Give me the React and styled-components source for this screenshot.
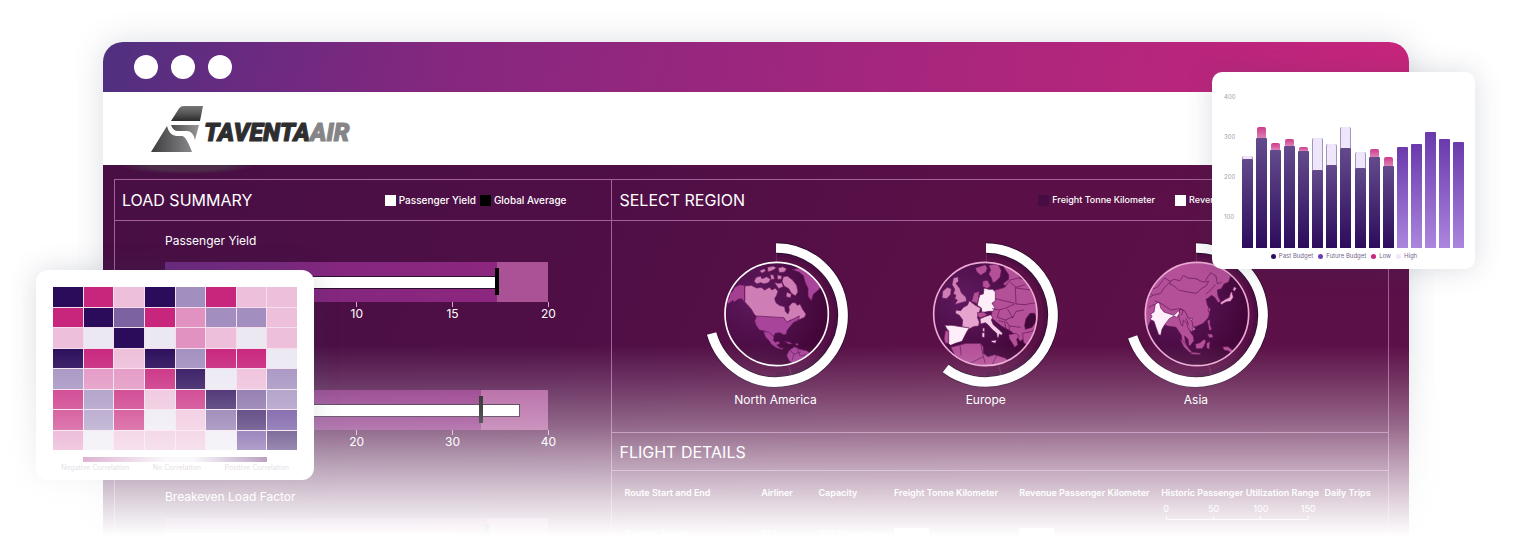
import React from 'react'
import styled, { createGlobalStyle } from 'styled-components'

const GlobalStyle = createGlobalStyle`
  * {
    box-sizing: border-box;
  }

  body {
    margin: 0;
    background: #ffffff;
    font-family: Inter, "Open Sans", sans-serif;
  }
`

const line = '#a3609a'

const Page = styled.main`
  position: relative;
  height: 100vh;
  min-height: 540px;
  padding: 42px 105px 0 103px;
  overflow: hidden;
`

const BrowserWindow = styled.section`
  border-radius: 20px 20px 0 0;
  overflow: hidden;
  box-shadow: 0 0 32px rgba(60, 70, 100, 0.18);
`

const TitleBar = styled.div`
  display: flex;
  align-items: center;
  gap: 13px;
  height: 50px;
  padding-left: 31px;
  background: linear-gradient(100deg, #4f3080 0%, #6b2a80 12%, #85277f 26%, #a5267d 60%, #c8257c 100%);
`

const Dot = styled.span`
  width: 24px;
  height: 24px;
  border-radius: 50%;
  background: #ffffff;
`

const BrandBar = styled.header`
  display: flex;
  align-items: center;
  height: 73px;
  padding-left: 47px;
  background: #ffffff;
`

const Body = styled.div`
  height: 480px;
  padding: 14px 20px 0 11px;
  background:
    radial-gradient(66px 8px at 84px 1px, #4c2c48 60%, transparent 100%),
    linear-gradient(115deg, #470f44 0%, #4f0f46 35%, #5a1046 60%, #5c1148 100%);
`

const Dashboard = styled.div`
  display: grid;
  grid-template-columns: 39fr 61fr;
  height: 100%;
  border: 1px solid ${line};
`

const Column = styled.div`
  & + & {
    border-left: 1px solid ${line};
  }
`

const PanelHeader = styled.div`
  display: flex;
  align-items: center;
  justify-content: space-between;
  height: ${props => props.$height || 41}px;
  padding: 0 ${props => props.$right || 45}px 0 7px;
  border-bottom: 1px solid ${line};
`

const PanelTitle = styled.h2`
  margin: 0;
  font-size: 16px;
  font-weight: 400;
  line-height: 24px;
  color: #ffffff;
`

const Legend = styled.div`
  display: flex;
  gap: ${props => props.$gap}px;
  font-size: ${props => props.$size}px;
`

const LegendItem = styled.span`
  display: flex;
  align-items: center;
  gap: 3px;
  font-weight: 500;
  line-height: 16px;
  white-space: nowrap;
  color: #ffffff;
`

const Swatch = styled.i`
  width: 11px;
  height: 11px;
  background: ${props => props.$color};
`

const BulletList = styled.div`
  display: flex;
  flex-direction: column;
  gap: 35px;
  padding: 10px 63px 0 50px;
`

const BulletTitle = styled.h3`
  height: 20px;
  margin: 0 0 11px;
  font-size: 12px;
  font-weight: 400;
  line-height: 20px;
  color: #ffffff;
`

const BulletTrack = styled.div`
  position: relative;
  display: flex;
  align-items: center;
  height: 40px;
  background: linear-gradient(90deg, #6c2a80, #85277f 45%, #8f267e);
`

const BulletRest = styled.div`
  position: absolute;
  top: 0;
  right: 0;
  bottom: 0;
  background: #ab5297;
`

const BulletValue = styled.div`
  position: relative;
  height: 13px;
  border: 1px solid #2c1030;
  background: #ffffff;
`

const BulletMarker = styled.div`
  position: absolute;
  top: 6px;
  width: 4px;
  height: 27px;
  margin-left: -2px;
  background: #000000;
`

const Axis = styled.div`
  display: flex;
  justify-content: space-between;
  height: 22px;
`

const Tick = styled.span`
  display: flex;
  flex-direction: column;
  align-items: center;
  width: 0;
  font-size: 12px;
  line-height: 14px;
  color: #ffffff;

  &::before {
    content: '';
    flex: none;
    width: 1px;
    height: 5px;
    background: #d6a6cc;
  }
`

const Regions = styled.div`
  display: grid;
  grid-template-columns: repeat(3, 1fr);
  height: 212px;
  padding: 19px 87px 0 58px;
  border-bottom: 1px solid ${line};
`

const Region = styled.figure`
  display: flex;
  flex-direction: column;
  align-items: center;
  margin: 0;

  svg {
    flex: none;
  }
`

const RegionName = styled.figcaption`
  font-size: 12px;
  line-height: 20px;
  color: #ffffff;
`

const FlightTable = styled.table`
  width: 100%;
  padding-left: 12px;
  border-spacing: 0;
  table-layout: fixed;
  font-size: 9px;
  color: #ffffff;
`

const HeadCell = styled.th`
  width: ${props => props.$width};
  padding: 15px 0 0;
  text-align: left;
  vertical-align: top;
  font-weight: 600;
  line-height: 14px;
  white-space: nowrap;
`

const Cell = styled.td`
  padding: 8px 0 0;
  line-height: 12px;
  white-space: nowrap;
`

const RangeAxis = styled.span`
  display: flex;
  justify-content: space-between;
  width: 142px;
  margin: 2px 0 0 5px;
  border-bottom: 1px solid #f3dcee;
  font-weight: 400;
  line-height: 14px;
`

const RangeTick = styled.span`
  display: flex;
  flex-direction: column;
  align-items: center;
  width: 0;

  &::after {
    content: '';
    width: 1px;
    height: 3px;
    background: #f3dcee;
  }
`

const CellBar = styled.span`
  display: block;
  width: 35px;
  height: 12px;
  background: #ffffff;
`

const Card = styled.aside`
  position: absolute;
  background: #ffffff;
  box-shadow: 0 0 28px rgba(50, 60, 90, 0.18);
`

const HeatCard = styled(Card)`
  top: 270px;
  left: 36px;
  width: 278px;
  padding: 17px 17px 6px;
  border-radius: 12px;
`

const HeatGrid = styled.div`
  display: grid;
  grid-template-columns: repeat(8, 1fr);
  grid-template-rows: repeat(8, 1fr);
  gap: 1px;
  height: 163px;
  background: #f5dfee;
`

const HeatCell = styled.span`
  background: ${props => props.$color};
`

const HeatScale = styled.div`
  height: 5px;
  margin: 7px 30px 0;
  background: linear-gradient(90deg, #b04a92, #f2eef6 45%, #f2eef6 60%, #5b1f6f);
`

const HeatLabels = styled.div`
  display: flex;
  justify-content: space-between;
  padding: 0 8px;
  font-size: 7px;
  line-height: 12px;
  color: #b3a6b8;
`

const BudgetCard = styled(Card)`
  top: 72px;
  right: 39px;
  width: 263px;
  padding: 20px 11px 8px 12px;
  border-radius: 10px;
`

const BudgetPlot = styled.div`
  display: flex;
`

const Scale = styled.div`
  display: flex;
  flex-direction: column;
  gap: 30px;
  width: 18px;
  height: 156px;
  font-size: 6px;
  line-height: 10px;
  color: #a79ab3;
`

const Bars = styled.div`
  display: flex;
  flex: 1;
  align-items: flex-end;
  justify-content: space-between;
`

const BarStack = styled.div`
  display: flex;
  flex-direction: column;
  align-items: center;
  width: 11px;
`

const BarTip = styled.div`
  width: ${props => (props.$kind === 'low' ? 9 : 11)}px;
  border-radius: 2px 2px 0 0;
  border: ${props => (props.$kind === 'low' ? 'none' : 'solid #a394bd')};
  border-width: 0 1px;
  background: ${props => (props.$kind === 'low' ? 'linear-gradient(#cc3b8c, #dd80b4)' : '#efe6fb')};
`

const Bar = styled.div`
  width: 100%;
  border-radius: 1px 1px 0 0;
  background: ${props => (props.$future ? 'linear-gradient(#6a3aac, #ab86de)' : 'linear-gradient(#634a8c, #2c0c5c)')};
`

const BudgetLegend = styled.div`
  display: flex;
  justify-content: center;
  gap: 5px;
  padding-top: 3px;
`

const BudgetKey = styled.span`
  display: flex;
  align-items: center;
  gap: 3px;
  font-size: 6px;
  line-height: 10px;
  color: #75658a;

  &::before {
    content: '';
    width: 5px;
    height: 5px;
    border-radius: 50%;
    background: ${props => props.$color};
  }
`

const Fade = styled.div`
  position: absolute;
  top: 345px;
  right: 0;
  bottom: 0;
  left: 0;
  pointer-events: none;
  background: linear-gradient(
    rgba(255, 255, 255, 0) 0,
    rgba(255, 255, 255, 0.15) 35px,
    rgba(255, 255, 255, 0.36) 80px,
    rgba(255, 255, 255, 0.6) 118px,
    rgba(255, 255, 255, 0.81) 155px,
    #ffffff 191px
  );
`

const bullets = [
  { title: 'Passenger Yield', ticks: [0, 5, 10, 15, 20], value: 86.5, marker: 86.5, rest: 13.5 },
  { title: '', ticks: [0, 10, 20, 30, 40], value: 92.5, marker: 82.5, rest: 17.5 },
  { title: 'Breakeven Load Factor', ticks: [], value: 76, marker: 84, rest: 16 },
]

const heatColors = {
  N: '#2a0c5a',
  D: '#5a3792',
  V: '#7d62a1',
  L: '#a28fbf',
  G: '#ebe8f2',
  P: '#eebfda',
  R: '#e292c1',
  M: '#c8257d',
}

const heatRows = ['NMPNLMPP', 'MNVMRLLP', 'PGNGRPGP', 'NMPNLMMG', 'LRRMNGPL', 'MLMPMNVL', 'MLMGPVND', 'RGPPPGDN']

const budget = [
  { base: 89, tip: 3, kind: 'high' },
  { base: 110, tip: 11, kind: 'low' },
  { base: 98, tip: 7, kind: 'low' },
  { base: 102, tip: 7, kind: 'low' },
  { base: 97, tip: 4, kind: 'low' },
  { base: 78, tip: 32, kind: 'high' },
  { base: 83, tip: 21, kind: 'high' },
  { base: 100, tip: 21, kind: 'high' },
  { base: 80, tip: 16, kind: 'high' },
  { base: 91, tip: 8, kind: 'low' },
  { base: 82, tip: 9, kind: 'low' },
  { base: 101, future: true },
  { base: 104, future: true },
  { base: 116, future: true },
  { base: 109, future: true },
  { base: 106, future: true },
]

const regions = [
  {
    id: 'na',
    name: 'North America',
    sweep: 254,
    cx: 260,
    ring: '#ffffff',
    shapes: [
      ['#a43f92', 'M164 166l-16-2-14 8-6 12-8 6-2 12-8 12 4 8 14-10 6 4 10-8 10-2 8 8 12 8z'],
      ['#cf7db5', 'M164 168l20-2 16 8 14-2 10 8 14-8 8 8 10-6 8 10-4 12-6 10 4 12 10 8 16 4 2 14 8 8 4-12-2-10 10-12 10 0 6 8 8-4 8 16 10 14-4 10-18 8-10 6-14-6-12 10-8-12-80-6-10-10-8-14-12-14-8-8z'],
      ['#cf7db5', 'M198 142l14-4 4 8 14-6 12 8-6 10-14 4-10-4-12 4-8-8zM208 122l14-6 6 6-12 8zM232 112l18-4 10 6-14 8-12 4zM264 114l14-4 12 6-6 10-16 2zM240 134l10 0 4 12-10 4zM262 134l14 4-2 10-12 0zM280 140l12-2 16 12 12 16 4 20-8 12-12-8-8-14-14-8-6-14zM252 156l12 4 12-2 4 12-14 6zM290 186l14 6-2 12-14-4z'],
      ['#a8449a', 'M200 258l82 5 8 13 14-6 24-12-2 10-16 10-10 12-8 10-4 14-8 0-10-6-14 2-6 10-8-8-8 0-8-8-18-4-10-14-4-14z'],
      ['#a8449a', 'M216 303l22 4 8 8 6 6-2 10 6 6 10-4 4 8-10 4 10 8 10 2-4 4-18-6-14-10-8-12-10-10-4-12-2-4z'],
      ['#a8449a', 'M306 119l34-8 26 22 28 38-12 12-12 10-6 20-10-14 0-24-8-16-6-22-12-10z'],
      ['#a8449a', 'M290 376l8-16 16-10 16 8 20 4 14 10-10 20-30 20-14-8-14-14z'],
      ['#a8449a', 'M282 334l16 2 10 6-12 0zM316 340l8 0 2 6-8 0z'],
    ],
    borders: 'M164 168v44M298 360l14 12 20-6M312 372l-6 20M322 356l8 22 20-4',
  },
  {
    id: 'eu',
    name: 'Europe',
    sweep: 217,
    cx: 256,
    ring: '#eba9d3',
    shapes: [
      ['#b45098', 'M226 114l30-10 6 10-4 12-16 10-12-10zM266 106l16-4 14 4 8 16-4 20-14 14-8 2-4-14-8-12 6-12zM316 100l30 26 26 30-22-8-18 8-18 12-4-8 16-12 0-14-14-20z'],
      ['#cf7db5', 'M160 144l14-4 2 14-8 6 12 16 4 12 14 14 2 12-16 4-20 6 8-14-8-4 4-10-8-4 4-14-8-14zM128 184l14-12 12 4-2 18-12 12-14-2z'],
      ['#b45098', 'M248 154l14-4 10 18-10 8-14-6zM222 188l16-4-2 20-4 18-10-6-8 0z'],
      ['#b45098', 'M280 182l34-10 16-22 26-6 30 10 34 60 0 60-30 40-30 20-10-16-20-16-26-14-30-24z'],
      ['#fdeef9', 'M252 174l14 4 12 0 8 8 0 14 0 12-10 8 8 12-4 12-14 0-20 4-2-14-12-8 4-20 4-12 10-2z'],
      ['#e6a3cd', 'M208 212l18 14 16 8-4 14-6 14 6 14-2 12-16 2-10 6-24-6 2-20-10-14-12-6 2-10 14 2 8-10 12-6z'],
      ['#fdeef9', 'M134 286l22 0 52 8-8 12-8 16-6 12-20 6-14 6-8-6 0-38z'],
      ['#b45098', 'M136 302l10 0 0 38-10 0-4-14z'],
      ['#f4cfe8', 'M240 266l14-6 18-6 6 8-4 8 6 14 14 12 14 14-4 6-6-4-2 10-4 2-2-14-14-12-12-14-8-6-14 4zM274 332l16-2-4 10-12-4z'],
      ['#f4cfe8', 'M248 294l6 0 0 12-6-2zM246 308l8 0 0 14-8 0z'],
      ['#b45098', 'M326 314l22-4 10 8-8 10 4 16-10 8-8-14-8-12zM368 310l30-6 16-14-8 30-22 30-14-14z'],
      ['#b45098', 'M152 352l46-12 44 0 8 10 0 20 14 10 20-6 32 10 10 10-36 20-40 6-50-14-32-24z'],
      ['#b45098', 'M232 248l18-2 12 8-10 6-12 4-6-6z'],
      ['#3f0838', 'M378 266l12-16 14 0 6 22-14 20-20 6-2-12z'],
    ],
    borders: 'M286 206l58 14M330 156l18 16 28-8M348 174l48 6M346 172l2 50 26 2 34-6M276 236l22 4 24-8 22-10M298 240l-6 22 24 8 24-10M322 236l16 28 10-20 24-4M316 270l12 18 34 4M296 272l18 4 4 22M328 288l0 24M180 346l4 30M242 340l8 40 6 20M250 380l-40 20M290 376l-14 30',
  },
  {
    id: 'as',
    name: 'Asia',
    sweep: 251,
    cx: 261,
    ring: '#eba9d3',
    shapes: [
      ['#b45098', 'M104 248l0-30 12-34 30-40 40-30 60-20 50 2 40 18 26 24-6 18-14 6-8 14-12 4 2 18 8 16-8 4-10-16-10-6-6 6-10 6 4 16 8 16-4 22-16 18-22 10-14 2-4 14 10 12 2 14-12 16-4-4-2-16-10-10 2 18 10 18-4 2-16-22-2-18-8-12-8-12-26-4-24-12-12-16-10 4-6 12-10 24z'],
      ['#ffeefb', 'M136 222l12-6 4 18 10 12 18 6 12 4 14-14 4 8-10 12-8-4-14 8-14 18-8 14-4 18-6-2-8-22-6-18-12-6 6-8-4-8 10-6z'],
      ['#e9a3cf', 'M372 170l8 4-6 10-6-4zM366 186l4 16-8 12-14 2-14 8-4-6 16-10 12-6 4-16zM236 264l12 2-6 10-8-4zM236 290l16 0 4 8-12 8-8-8z'],
      ['#b45098', 'M210 328l10 6 12 16 14 16-6 2-18-16zM256 342l14-4 12-10 6 6-6 14-6 8-18 0zM290 340l10-6-2 24-8-4zM242 366l30 4-2 4-28-2zM338 350l16 0 18 14-6 6-12-8-12-2zM292 272l8-4 0 16 6 14-8 4zM292 312l14 0 4 10-12 2zM296 232l6 4-4 12-4-6z'],
      ['#b45098', 'M210 236l14 6 10 20 12 12 4 20-4 12-12-12-4-16-10-8-2 18-4-2-8-26z'],
    ],
    borders: 'M180 154l12-6 18 4 10-16 14 8 24 2 20 10 18-2-8 14-14 8-14 14-28-4-26-6-14-12-12-6zM286 152l16-24 16 10 4 24 14-6M104 210l24-14 24-6 10-16 18-18M128 196l-14-14 28-10 22-28 16 10M116 232l20-10M134 212l22 10 26 18 28-4 10 6M220 240l-6 16M228 264l8 20M316 164l-18 20-10 8',
  },
]

const flightHeads = [
  ['Route Start and End', '17.9%'],
  ['Airliner', '7.5%'],
  ['Capacity', '9.9%'],
  ['Freight Tonne Kilometer', '16.4%'],
  ['Revenue Passenger Kilometer', '18.6%'],
  ['Historic Passenger Utilization Range', '21.4%'],
  ['Daily Trips', '8.3%'],
]

function Logo() {
  return (
    <svg width="210" height="54" viewBox="0 0 210 54" role="img" aria-label="Taventa Air">
      <defs>
        <linearGradient id="wing" x1="0" y1="0" x2="0" y2="1">
          <stop offset="0" stopColor="#777" />
          <stop offset="0.5" stopColor="#555" />
          <stop offset="1" stopColor="#2b2b2d" />
        </linearGradient>
        <linearGradient id="peak">
          <stop offset="0" stopColor="#3d3d40" />
          <stop offset="1" stopColor="#88888b" />
        </linearGradient>
        <linearGradient id="fold">
          <stop offset="0" stopColor="#4d4d50" />
          <stop offset="1" stopColor="#97979a" />
        </linearGradient>
      </defs>
      <path fill="url(#wing)" d="M21 19L28 8Q30 4 34 4H53L50 19Z" />
      <path fill="url(#fold)" d="M21 23H49L45 38Q43 29 37 29H28Q23 29 21 23Z" />
      <path fill="url(#peak)" d="M1 50L17 24Q19 33 26 34H32Q36 34 42 50Z" />
      <text
        x="54"
        y="39"
        fontFamily='"Liberation Sans Narrow", Roboto, sans-serif'
        fontSize="25"
        fontWeight="900"
        fontStyle="italic"
        fill="#2e2e30"
        stroke="#2e2e30"
        strokeWidth="1"
        strokeLinejoin="round"
      >
        TAVENTA<tspan fill="#858588" stroke="#858588">AIR</tspan>
      </text>
    </svg>
  )
}

function Globe({ region }) {
  const angle = (region.sweep * Math.PI) / 180
  const endX = 258 + 201 * Math.sin(angle)
  const endY = 255 - 201 * Math.cos(angle)
  const arc = `M258 54A201 201 0 1 1 ${endX} ${endY}`

  return (
    <svg width="150" height="150" viewBox="33 30 450 450" aria-hidden="true">
      <defs>
        <radialGradient id={region.id + '-sea'} cx="0.3" cy="0.35" r="0.7">
          <stop offset="0" stopColor="#5f1a60" />
          <stop offset="1" stopColor="#430638" />
        </radialGradient>
        <clipPath id={region.id + '-disc'}>
          <circle cx={region.cx} cy="252" r="154" />
        </clipPath>
      </defs>
      <path d="M258 72A183 183 0 0 1 258 438" fill="none" stroke="#3a0b3c" strokeOpacity="0.35" strokeWidth="20" />
      <path d="M259 68V98M296 406l8 30" stroke="#7c3a78" strokeWidth="2" />
      <path d={arc} fill="none" stroke="#250a28" strokeWidth="33" />
      <path d={arc} fill="none" stroke="#ffffff" strokeWidth="29" />
      <circle cx={region.cx} cy="252" r="155" fill={`url(#${region.id}-sea)`} />
      <g clipPath={`url(#${region.id}-disc)`} stroke="#641558" strokeWidth="2" strokeLinejoin="round">
        {region.shapes.map(([fill, d]) => (
          <path key={d} d={d} fill={fill} />
        ))}
        <path d={region.borders} fill="none" />
      </g>
      <circle cx={region.cx} cy="252" r="155" fill="none" stroke={region.ring} strokeWidth="5" />
    </svg>
  )
}

function Bullet({ bullet }) {
  return (
    <div>
      <BulletTitle>{bullet.title}</BulletTitle>
      <BulletTrack>
        <BulletRest style={{ width: bullet.rest + '%' }} />
        <BulletValue style={{ width: bullet.value + '%' }} />
        <BulletMarker style={{ left: bullet.marker + '%' }} />
      </BulletTrack>
      <Axis>
        {bullet.ticks.map(tick => <Tick key={tick}>{tick}</Tick>)}
      </Axis>
    </div>
  )
}

function Flights() {
  return (
    <FlightTable>
      <thead>
        <tr>
          {flightHeads.map(([head, width]) => (
            <HeadCell key={head} $width={width}>
              {head}
              {head.startsWith('Historic') && (
                <RangeAxis>
                  {[0, 50, 100, 150].map(n => <RangeTick key={n}>{n}</RangeTick>)}
                </RangeAxis>
              )}
            </HeadCell>
          ))}
        </tr>
      </thead>
      <tbody>
        <tr>
          <Cell>Toronto Airport</Cell>
          <Cell>737</Cell>
          <Cell>200 Passengers</Cell>
          <Cell><CellBar /></Cell>
          <Cell><CellBar /></Cell>
          <Cell />
          <Cell />
        </tr>
      </tbody>
    </FlightTable>
  )
}

function CorrelationCard() {
  return (
    <HeatCard>
      <HeatGrid>
        {heatRows.join('').split('').map((key, i) => (
          <HeatCell key={i} $color={heatColors[key]} />
        ))}
      </HeatGrid>
      <HeatScale />
      <HeatLabels>
        <span>Negative Correlation</span>
        <span>No Correlation</span>
        <span>Positive Correlation</span>
      </HeatLabels>
    </HeatCard>
  )
}

function Budget() {
  return (
    <BudgetCard>
      <BudgetPlot>
        <Scale>
          <span>400</span>
          <span>300</span>
          <span>200</span>
          <span>100</span>
        </Scale>
        <Bars>
          {budget.map((bar, i) => (
            <BarStack key={i}>
              {bar.tip && <BarTip $kind={bar.kind} style={{ height: bar.tip }} />}
              <Bar $future={bar.future} style={{ height: bar.base }} />
            </BarStack>
          ))}
        </Bars>
      </BudgetPlot>
      <BudgetLegend>
        <BudgetKey $color="#2c0c5c">Past Budget</BudgetKey>
        <BudgetKey $color="#6f3fb0">Future Budget</BudgetKey>
        <BudgetKey $color="#c8257d">Low</BudgetKey>
        <BudgetKey $color="#efe6fb">High</BudgetKey>
      </BudgetLegend>
    </BudgetCard>
  )
}

export default function App() {
  return (
    <Page>
      <GlobalStyle />
      <BrowserWindow>
        <TitleBar>
          <Dot />
          <Dot />
          <Dot />
        </TitleBar>
        <BrandBar>
          <Logo />
        </BrandBar>
        <Body>
          <Dashboard>
            <Column>
              <PanelHeader>
                <PanelTitle>LOAD SUMMARY</PanelTitle>
                <Legend $gap={4} $size={10}>
                  <LegendItem><Swatch $color="#ffffff" />Passenger Yield</LegendItem>
                  <LegendItem><Swatch $color="#000000" />Global Average</LegendItem>
                </Legend>
              </PanelHeader>
              <BulletList>
                {bullets.map((bullet, i) => <Bullet key={i} bullet={bullet} />)}
              </BulletList>
            </Column>
            <Column>
              <PanelHeader $right={70}>
                <PanelTitle>SELECT REGION</PanelTitle>
                <Legend $gap={20} $size={9}>
                  <LegendItem><Swatch $color="#480c44" />Freight Tonne Kilometer</LegendItem>
                  <LegendItem><Swatch $color="#ffffff" />Revenue Passenger Kilometer</LegendItem>
                </Legend>
              </PanelHeader>
              <Regions>
                {regions.map(region => (
                  <Region key={region.id}>
                    <Globe region={region} />
                    <RegionName>{region.name}</RegionName>
                  </Region>
                ))}
              </Regions>
              <PanelHeader $height={38}>
                <PanelTitle>FLIGHT DETAILS</PanelTitle>
              </PanelHeader>
              <Flights />
            </Column>
          </Dashboard>
        </Body>
      </BrowserWindow>
      <CorrelationCard />
      <Budget />
      <Fade />
    </Page>
  )
}
